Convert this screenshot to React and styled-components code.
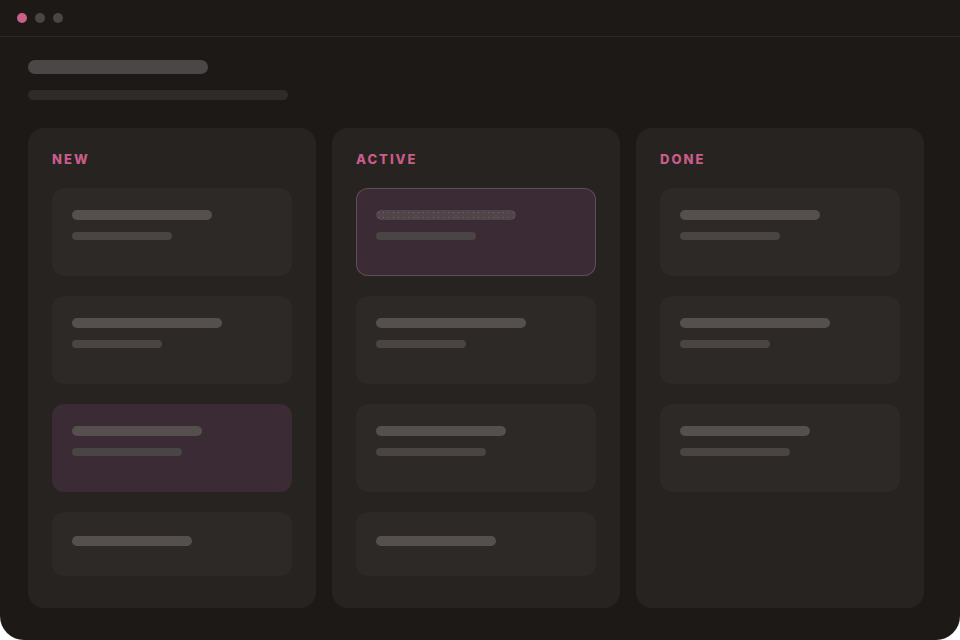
import React from 'react';
import styled, { createGlobalStyle } from 'styled-components';

const GlobalStyle = createGlobalStyle`
  html, body { margin: 0; padding: 0; background: #ffffff; }
  body { font-family: Inter, "Noto Sans", "Liberation Sans", sans-serif; }
`;

const columns = [
  {
    title: 'NEW',
    cards: [
      { a: 140, b: 100 },
      { a: 150, b: 90 },
      { a: 130, b: 110, tint: true },
      { a: 120 },
    ],
  },
  {
    title: 'ACTIVE',
    cards: [
      { a: 140, b: 100, active: true },
      { a: 150, b: 90 },
      { a: 130, b: 110 },
      { a: 120 },
    ],
  },
  {
    title: 'DONE',
    cards: [
      { a: 140, b: 100 },
      { a: 150, b: 90 },
      { a: 130, b: 110 },
    ],
  },
];

const App = () => {
  return (
    <>
      <GlobalStyle />
      <Window>
        <TitleBar>
          <Dot $color="#c95f8b" />
          <Dot />
          <Dot />
        </TitleBar>
        <Content>
          <Header>
            <TitleBar1 />
            <SubBar />
          </Header>
          <Board>
            {columns.map((col) => (
              <Column key={col.title}>
                <Label>{col.title}</Label>
                <CardList>
                  {col.cards.map((c, i) => (
                    <Card key={i} $tint={c.tint || c.active} $active={c.active} $compact={!c.b}>
                      <Line $active={c.active} style={{ width: c.a }} />
                      {c.b && <SubLine style={{ width: c.b }} />}
                    </Card>
                  ))}
                </CardList>
              </Column>
            ))}
          </Board>
        </Content>
      </Window>
    </>
  );
};

const Window = styled.div`
  width: 960px;
  height: 640px;
  background: #1c1917;
  border-radius: 0 0 24px 24px;
  overflow: hidden;
  display: flex;
  flex-direction: column;
`;

const TitleBar = styled.div`
  height: 37px;
  box-sizing: border-box;
  border-bottom: 1px solid #2c2826;
  display: flex;
  align-items: center;
  gap: 8px;
  padding: 0 0 0 17px;
`;

const Dot = styled.span`
  width: 10px;
  height: 10px;
  border-radius: 50%;
  background: ${(p) => p.$color || '#4a4645'};
`;

const Content = styled.div`
  flex: 1;
  padding: 23px 36px 32px 28px;
  display: flex;
  flex-direction: column;
`;

const Header = styled.div`
  display: flex;
  flex-direction: column;
  gap: 16px;
  margin-bottom: 28px;
`;

const TitleBar1 = styled.div`
  width: 180px;
  height: 14px;
  border-radius: 7px;
  background: #4b4746;
`;

const SubBar = styled.div`
  width: 260px;
  height: 10px;
  border-radius: 5px;
  background: #2f2b2a;
`;

const Board = styled.div`
  display: grid;
  grid-template-columns: repeat(3, 288px);
  gap: 16px;
  height: 480px;
`;

const Column = styled.div`
  background: #262321;
  border-radius: 16px;
  padding: 24px;
  display: flex;
  flex-direction: column;
`;

const Label = styled.div`
  color: #c85d89;
  font-size: 13px;
  line-height: 14px;
  font-weight: 800;
  letter-spacing: 2px;
  margin-bottom: 22px;
`;

const CardList = styled.div`
  display: flex;
  flex-direction: column;
  gap: 20px;
`;

const Card = styled.div`
  box-sizing: border-box;
  height: ${(p) => (p.$compact ? '64px' : '88px')};
  padding: ${(p) => (p.$compact ? '24px 20px' : '22px 20px')};
  border-radius: 12px;
  background: ${(p) => (p.$tint ? '#3a2b35' : '#2c2927')};
  box-shadow: ${(p) => (p.$active ? 'inset 0 0 0 1px #5e4e57' : 'none')};
  display: flex;
  flex-direction: column;
  gap: 12px;
`;

const Line = styled.div`
  height: 10px;
  border-radius: 5px;
  background: ${(p) =>
    p.$active
      ? 'radial-gradient(circle, rgba(200,93,137,0.55) 0.6px, transparent 0.9px) 0 0 / 5px 5px, #4e4649'
      : '#55504e'};
`;

const SubLine = styled.div`
  height: 8px;
  border-radius: 4px;
  background: #4a4544;
`;

export default App;
